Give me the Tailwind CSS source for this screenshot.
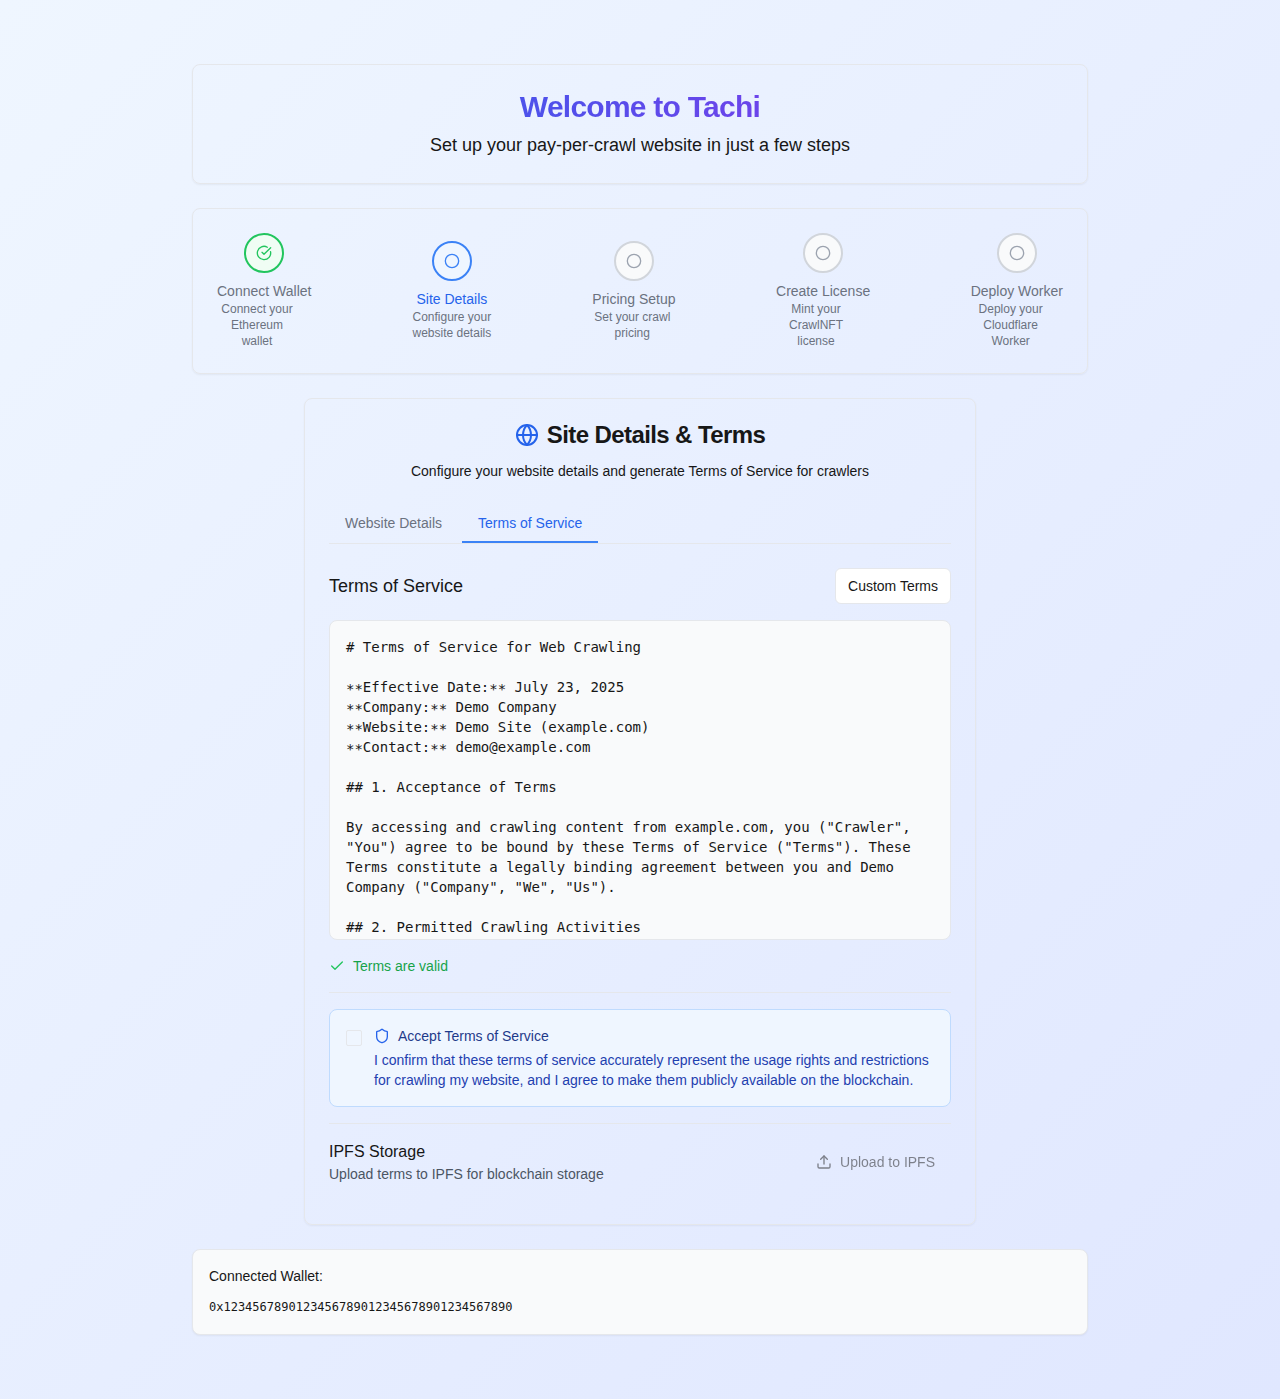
<!DOCTYPE html>
<html lang="en">
<head>
<meta charset="utf-8">
<title>Tachi</title>
<script src="https://cdn.jsdelivr.net/npm/@tailwindcss/browser@4"></script>
</head>
<body class="font-['Liberation_Sans',Arial,sans-serif] text-[#171717]">
<div class="min-h-screen bg-[linear-gradient(to_bottom_right,#eff6ff,#e0e7ff)] py-16">
<div class="mx-auto flex w-[896px] flex-col gap-6">

<header class="flex flex-col gap-1.5 rounded-lg border border-[#e5e7eb] p-6 text-center shadow-xs">
<h1 class="bg-[linear-gradient(to_right,#2563eb,#9333ea)] bg-clip-text text-3xl font-bold tracking-tight text-transparent">Welcome to Tachi</h1>
<p class="text-lg leading-7">Set up your pay-per-crawl website in just a few steps</p>
</header>

<ol class="flex items-center justify-between rounded-lg border border-[#e5e7eb] p-6 text-[#6b7280] shadow-xs">
<li>
<div class="mx-auto flex size-10 items-center justify-center rounded-full border-2 border-[#22c55e] bg-[#f0fdf4] text-[#22c55e]"><svg class="size-4" viewBox="0 0 24 24" fill="none" stroke="currentColor" stroke-width="2" stroke-linecap="round" stroke-linejoin="round"><path d="M21.801 10A10 10 0 1 1 17 3.335"/><path d="m9 11 3 3L22 4"/></svg></div>
<p class="mt-2 text-center text-sm">Connect Wallet</p>
<p class="max-w-20 text-center text-xs">Connect your Ethereum wallet</p>
</li>
<li>
<div class="mx-auto flex size-10 items-center justify-center rounded-full border-2 border-[#3b82f6] bg-[#eff6ff] text-[#3b82f6]"><svg class="size-4" viewBox="0 0 24 24" fill="none" stroke="currentColor" stroke-width="2"><circle cx="12" cy="12" r="10"/></svg></div>
<p class="mt-2 text-center text-sm text-[#2563eb]">Site Details</p>
<p class="max-w-20 text-center text-xs">Configure your website details</p>
</li>
<li>
<div class="mx-auto flex size-10 items-center justify-center rounded-full border-2 border-[#d1d5db] bg-[#f9fafb] text-[#9ca3af]"><svg class="size-4" viewBox="0 0 24 24" fill="none" stroke="currentColor" stroke-width="2"><circle cx="12" cy="12" r="10"/></svg></div>
<p class="mt-2 text-center text-sm">Pricing Setup</p>
<p class="max-w-20 text-center text-xs">Set your crawl pricing</p>
</li>
<li>
<div class="mx-auto flex size-10 items-center justify-center rounded-full border-2 border-[#d1d5db] bg-[#f9fafb] text-[#9ca3af]"><svg class="size-4" viewBox="0 0 24 24" fill="none" stroke="currentColor" stroke-width="2"><circle cx="12" cy="12" r="10"/></svg></div>
<p class="mt-2 text-center text-sm">Create License</p>
<p class="max-w-20 text-center text-xs">Mint your CrawlNFT license</p>
</li>
<li>
<div class="mx-auto flex size-10 items-center justify-center rounded-full border-2 border-[#d1d5db] bg-[#f9fafb] text-[#9ca3af]"><svg class="size-4" viewBox="0 0 24 24" fill="none" stroke="currentColor" stroke-width="2"><circle cx="12" cy="12" r="10"/></svg></div>
<p class="mt-2 text-center text-sm">Deploy Worker</p>
<p class="max-w-20 text-center text-xs">Deploy your Cloudflare Worker</p>
</li>
</ol>

<main class="mx-auto w-[672px] rounded-lg border border-[#e5e7eb] p-6 shadow-xs">
<h2 class="flex items-center justify-center gap-2 text-2xl leading-none font-bold tracking-tight"><svg class="size-6 text-[#2563eb]" viewBox="0 0 24 24" fill="none" stroke="currentColor" stroke-width="2" stroke-linecap="round" stroke-linejoin="round"><circle cx="12" cy="12" r="10"/><path d="M12 2a14.5 14.5 0 0 0 0 20 14.5 14.5 0 0 0 0-20"/><path d="M2 12h20"/></svg>Site Details &amp; Terms</h2>
<p class="mt-3.5 text-center text-sm">Configure your website details and generate Terms of Service for crawlers</p>

<nav class="mt-6 flex gap-1 border-b border-[#e5e7eb] text-sm">
<button class="border-b-2 border-transparent px-4 py-2 text-[#6b7280]">Website Details</button>
<button class="border-b-2 border-[#3b82f6] px-4 py-2 text-[#2563eb]">Terms of Service</button>
</nav>

<div class="mt-6 flex items-center justify-between">
<h3 class="text-lg">Terms of Service</h3>
<button class="h-9 rounded-md border border-[#e5e7eb] bg-white px-3 text-sm">Custom Terms</button>
</div>

<pre class="mt-4 h-80 overflow-hidden rounded-lg border border-[#e5e7eb] bg-[#f9fafb] p-4 font-['DejaVu_Sans_Mono',monospace] text-sm whitespace-pre-wrap"># Terms of Service for Web Crawling

<span class="align-[-2px] leading-none">**</span>Effective Date:<span class="align-[-2px] leading-none">**</span> July 23, 2025
<span class="align-[-2px] leading-none">**</span>Company:<span class="align-[-2px] leading-none">**</span> Demo Company
<span class="align-[-2px] leading-none">**</span>Website:<span class="align-[-2px] leading-none">**</span> Demo Site (example.com)
<span class="align-[-2px] leading-none">**</span>Contact:<span class="align-[-2px] leading-none">**</span> demo@example.com

## 1. Acceptance of Terms

By accessing and crawling content from example.com, you ("Crawler", "You") agree to be bound by these Terms of Service ("Terms"). These Terms constitute a legally binding agreement between you and Demo Company ("Company", "We", "Us").

## 2. Permitted Crawling Activities</pre>

<div class="mt-4 flex items-center gap-2 text-sm text-[#16a34a]"><svg class="size-4 text-[#22c55e]" viewBox="0 0 24 24" fill="none" stroke="currentColor" stroke-width="2" stroke-linecap="round" stroke-linejoin="round"><path d="M20 6 9 17l-5-5"/></svg>Terms are valid</div>

<div class="mt-4 border-t border-[#e5e7eb] pt-4">
<div class="flex items-start gap-3 rounded-lg border border-[#bfdbfe] bg-[#eff6ff] p-4 text-sm">
<span class="mt-1 size-4 shrink-0 rounded-xs border border-[#e5e7eb]"></span>
<div>
<p class="flex items-center gap-2 text-[#1e3a8a]"><svg class="size-4 text-[#2563eb]" viewBox="0 0 24 24" fill="none" stroke="currentColor" stroke-width="2" stroke-linecap="round" stroke-linejoin="round"><path d="M20 13c0 5-3.5 7.5-7.66 8.95a1 1 0 0 1-.67-.01C7.5 20.5 4 18 4 13V6a1 1 0 0 1 1-1c2 0 4.5-1.2 6.24-2.72a1.17 1.17 0 0 1 1.52 0C14.51 3.81 17 5 19 5a1 1 0 0 1 1 1z"/></svg>Accept Terms of Service</p>
<p class="mt-1 text-[#1e40af]">I confirm that these terms of service accurately represent the usage rights and restrictions for crawling my website, and I agree to make them publicly available on the blockchain.</p>
</div>
</div>
</div>

<div class="mt-4 flex items-center justify-between border-t border-[#e5e7eb] py-4">
<div>
<h4>IPFS Storage</h4>
<p class="text-sm text-[#4b5563]">Upload terms to IPFS for blockchain storage</p>
</div>
<button class="flex h-10 items-center gap-2 px-4 text-sm opacity-50" disabled><svg class="size-4" viewBox="0 0 24 24" fill="none" stroke="currentColor" stroke-width="2" stroke-linecap="round" stroke-linejoin="round"><path d="M21 15v4a2 2 0 0 1-2 2H5a2 2 0 0 1-2-2v-4"/><path d="m17 8-5-5-5 5"/><path d="M12 3v12"/></svg>Upload to IPFS</button>
</div>
</main>

<footer class="rounded-lg border border-[#e5e7eb] bg-[#f9fafb] p-4 shadow-xs">
<p class="text-sm">Connected Wallet:</p>
<p class="mt-2.5 font-['DejaVu_Sans_Mono',monospace] text-xs leading-[22px]">0x1234567890123456789012345678901234567890</p>
</footer>

</div>
</div>
</body>
</html>
